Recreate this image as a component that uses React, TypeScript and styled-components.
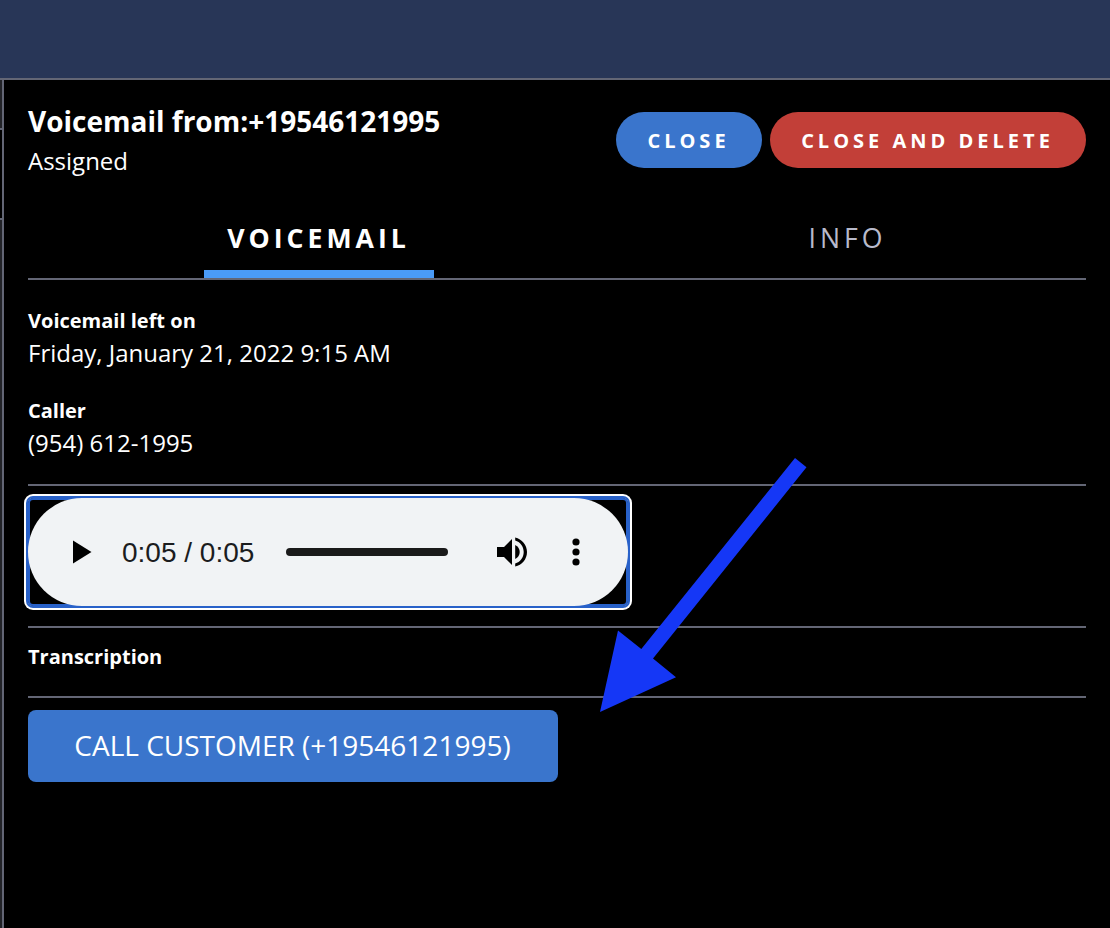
import React from "react";
import styled, { createGlobalStyle } from "styled-components";

const LINE = "#636675";

const GlobalStyle = createGlobalStyle`
  * { box-sizing: border-box; }
  body {
    margin: 0;
    background: #000;
    color: #fff;
    font-family: "Open Sans", "Noto Sans", sans-serif;
    overflow: hidden;
  }
  button { font-family: inherit; color: inherit; border: 0; padding: 0; }
`;

const Page = styled.div`
  position: relative;
  display: flex;
  flex-direction: column;
  width: 1110px;
  height: 928px;
`;

const TopBar = styled.header`
  height: 80px;
  background: #283657;
  border-bottom: 2px solid ${LINE};
`;

const Body = styled.div`
  flex: 1;
  display: flex;
`;

const TaskList = styled.aside`
  width: 4px;
  display: flex;
  flex-direction: column;
  border-right: 2px solid ${LINE};
  background: #222328;
`;

const TaskSlot = styled.div<{ $height: number; $selected?: boolean }>`
  height: ${(p) => p.$height}px;
  background: ${(p) => (p.$selected ? "#000" : "#222328")};
  border-bottom: 2px solid ${LINE};
`;

const Panel = styled.main`
  flex: 1;
  padding: 0 24px;
`;

const Header = styled.div`
  height: 118px;
  padding-top: 22px;
  display: flex;
  justify-content: space-between;
`;

const Title = styled.h1`
  margin: 0;
  font-size: 28px;
  line-height: 38px;
  font-weight: 700;
`;

const Status = styled.div`
  padding-top: 2px;
  font-size: 24px;
  line-height: 38px;
`;

const Actions = styled.div`
  display: flex;
  gap: 8px;
  padding-top: 10px;
`;

const PillButton = styled.button<{ $color: string; $width: number }>`
  width: ${(p) => p.$width}px;
  height: 56px;
  padding-right: 1px;
  border-radius: 28px;
  background: ${(p) => p.$color};
  font-size: 20px;
  font-weight: 700;
  letter-spacing: 4px;
  white-space: nowrap;
`;

const Tabs = styled.nav`
  display: grid;
  grid-template-columns: 1fr 1fr;
  justify-items: center;
  height: 82px;
  border-bottom: 2px solid ${LINE};
`;

const Tab = styled.div<{ $active?: boolean }>`
  width: 230px;
  height: 80px;
  margin-left: 52px;
  padding-top: 20px;
  text-align: center;
  font-size: 26.66px;
  line-height: 40px;
  letter-spacing: 4px;
  font-weight: ${(p) => (p.$active ? 700 : 400)};
  color: ${(p) => (p.$active ? "#fff" : "#b8bacb")};
  border-bottom: 8px solid ${(p) => (p.$active ? "#4a9bf7" : "transparent")};
`;

const Details = styled.section`
  height: 206px;
  padding-top: 24px;
  border-bottom: 2px solid ${LINE};
`;

const Field = styled.div`
  height: 90px;
`;

const Label = styled.div`
  font-size: 20px;
  line-height: 34px;
  font-weight: 700;
`;

const Value = styled.div`
  font-size: 24px;
  line-height: 30px;
`;

const PlayerRow = styled.section`
  height: 142px;
  padding-top: 12px;
  border-bottom: 2px solid ${LINE};
`;

const FocusFrame = styled.div`
  width: 600px;
  height: 108px;
  border-radius: 5px;
  box-shadow: inset 0 0 0 2px #2861c9, 0 0 0 2px #2861c9, 0 0 0 4px #fff;
`;

const Player = styled.div`
  display: flex;
  align-items: center;
  height: 108px;
  padding-left: 45px;
  border-radius: 54px;
  background: #f1f3f5;
  color: #1b1c1e;
`;

const Time = styled.span`
  flex: 0 0 auto;
  width: 194px;
  padding: 2px 0 0 30px;
  font-family: "Liberation Sans", Arial, sans-serif;
  font-size: 28px;
  white-space: nowrap;
`;

const Track = styled.div`
  width: 162px;
  height: 8px;
  margin-right: 49px;
  border-radius: 4px;
  background: #1a1a1a;
`;

const MenuIcon = styled.svg`
  margin-left: 45px;
`;

const Transcription = styled.section`
  height: 70px;
  padding-top: 12px;
  border-bottom: 2px solid ${LINE};
`;

const CallButton = styled.button`
  display: block;
  width: 530px;
  height: 72px;
  margin-top: 12px;
  padding: 0 1px 2px 0;
  border-radius: 8px;
  background: #3a75cc;
  font-size: 28px;
`;

const Pointer = styled.svg`
  position: absolute;
  left: 590px;
  top: 450px;
`;

export default function App() {
  return (
    <>
      <GlobalStyle />
      <Page>
        <TopBar />
        <Body>
          <TaskList>
            <TaskSlot $height={50} />
            <TaskSlot $height={90} $selected />
          </TaskList>
          <Panel>
            <Header>
              <div>
                <Title>Voicemail from:+19546121995</Title>
                <Status>Assigned</Status>
              </div>
              <Actions>
                <PillButton $color="#3a75cc" $width={146}>CLOSE</PillButton>
                <PillButton $color="#c23f38" $width={316}>CLOSE AND DELETE</PillButton>
              </Actions>
            </Header>
            <Tabs>
              <Tab $active>VOICEMAIL</Tab>
              <Tab>INFO</Tab>
            </Tabs>
            <Details>
              <Field>
                <Label>Voicemail left on</Label>
                <Value>Friday, January 21, 2022 9:15 AM</Value>
              </Field>
              <Field>
                <Label>Caller</Label>
                <Value>(954) 612-1995</Value>
              </Field>
            </Details>
            <PlayerRow>
              <FocusFrame>
                <Player>
                  <svg width="19" height="24" viewBox="0 0 19 24">
                    <path d="M0 0.5 18.5 12 0 23.5z" fill="#000" />
                  </svg>
                  <Time>0:05 / 0:05</Time>
                  <Track />
                  <svg width="30" height="30" viewBox="0 0 30 30" fill="#000">
                    <path d="M0 10v10h7l8 8V2L7 10z" />
                    <path d="M18.2 8v14c2.7-1.3 4.5-4 4.5-7s-1.8-5.7-4.5-7z" />
                    <path d="M18.2 .4v3.1c4.9 1.4 8.5 6 8.5 11.5s-3.6 10.1-8.5 11.5v3.1C24.9 28.1 30 22.2 30 15S24.9 1.9 18.2.4z" />
                  </svg>
                  <MenuIcon width="8" height="28" viewBox="0 0 8 28" fill="#000">
                    <circle cx="4" cy="4" r="3.6" />
                    <circle cx="4" cy="14" r="3.6" />
                    <circle cx="4" cy="24" r="3.6" />
                  </MenuIcon>
                </Player>
              </FocusFrame>
            </PlayerRow>
            <Transcription>
              <Label>Transcription</Label>
            </Transcription>
            <CallButton>CALL CUSTOMER (+19546121995)</CallButton>
          </Panel>
        </Body>
        <Pointer width="230" height="270" viewBox="590 450 230 270">
          <path d="M795 458 806.5 467.3 653 658.5 676 677.3 600 712 618 630.5 641.3 649z" fill="#1537f6" />
        </Pointer>
      </Page>
    </>
  );
}
